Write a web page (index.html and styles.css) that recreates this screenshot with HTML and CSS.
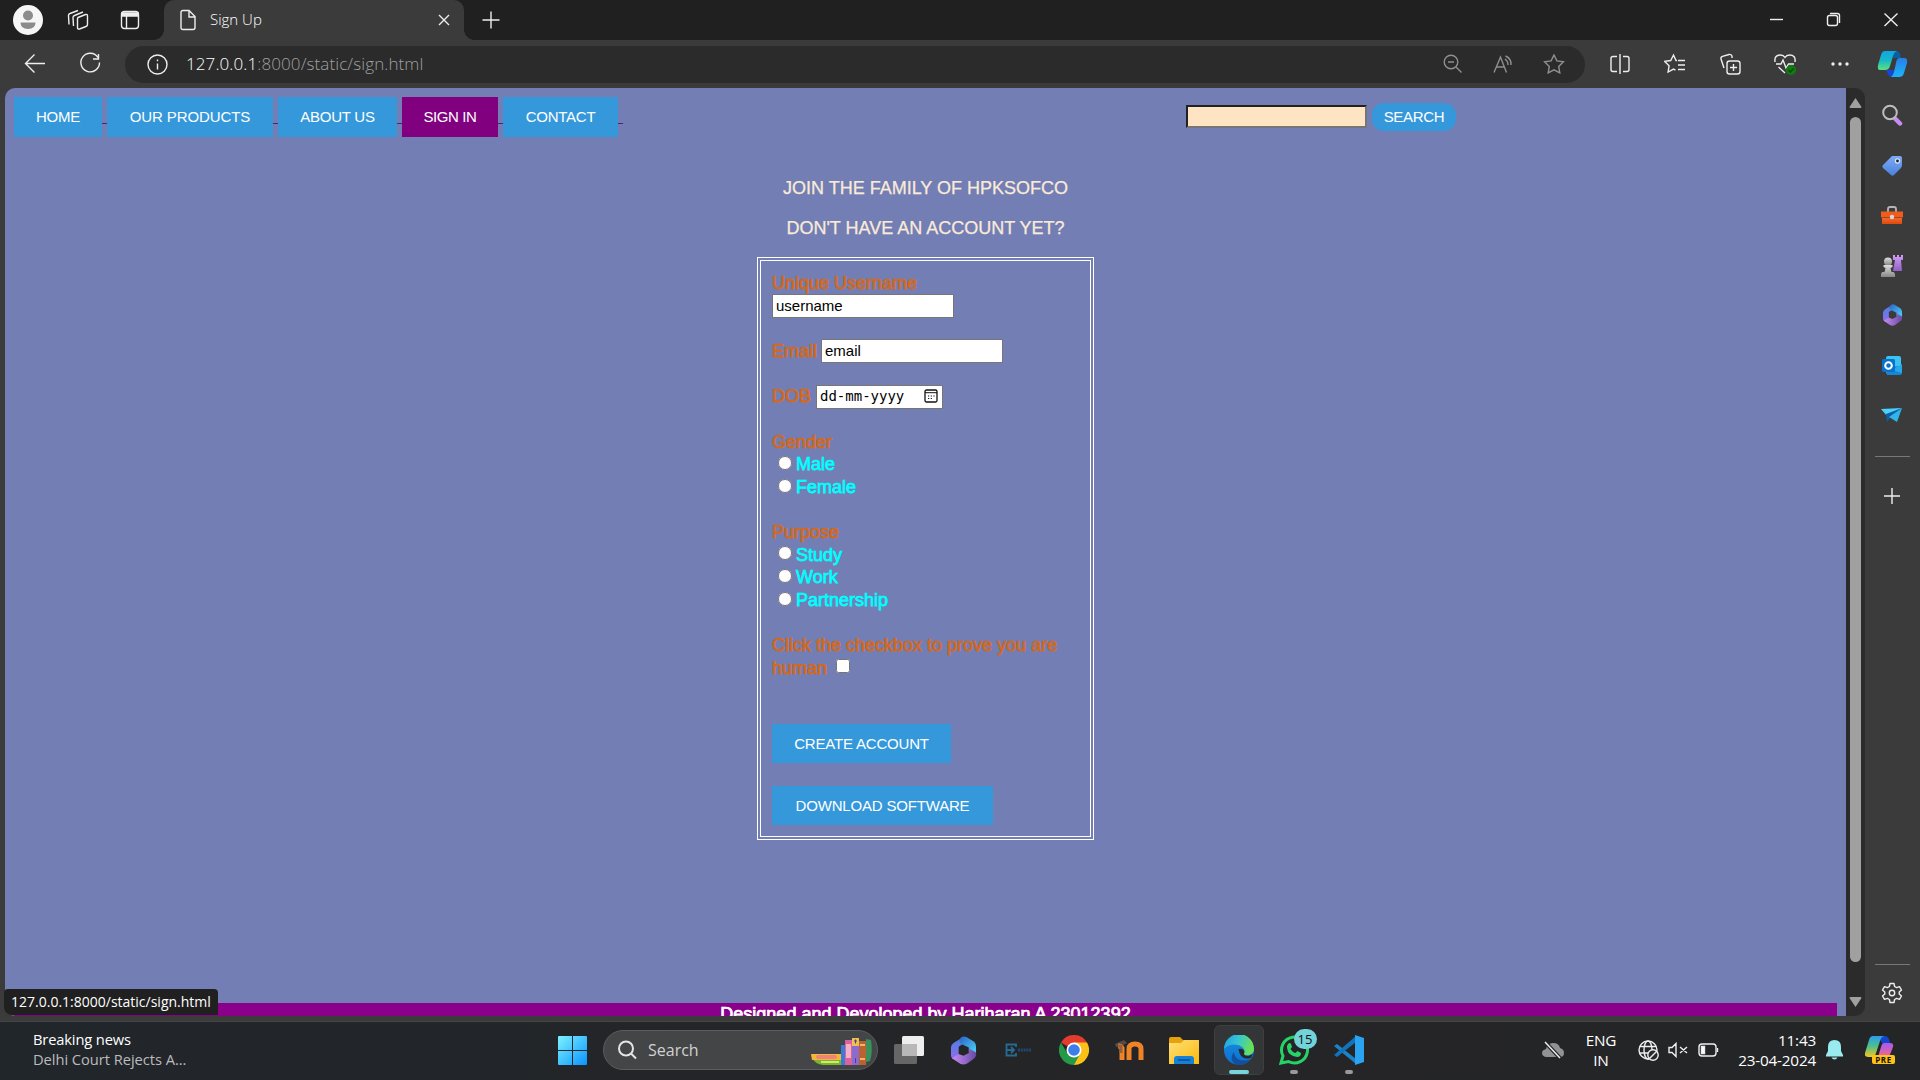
FILE: index.html
```html
<!DOCTYPE html>
<html lang="en">
<head>
<meta charset="utf-8">
<title>Sign Up</title>
<link rel="stylesheet" href="styles.css">
</head>
<body>
<svg class="defs" width="0" height="0">
  <defs>
    <linearGradient id="win" x1="0" y1="0" x2="1" y2="1"><stop offset="0" stop-color="#7cf3ff"/><stop offset="1" stop-color="#0a93ff"/></linearGradient>
    <linearGradient id="teal" x1="0" y1="0" x2="0" y2="1"><stop offset="0" stop-color="#12a5e3"/><stop offset=".5" stop-color="#16b9c9"/><stop offset="1" stop-color="#5fe07b"/></linearGradient>
    <linearGradient id="blue" x1="0" y1="0" x2="0" y2="1"><stop offset="0" stop-color="#2a7de9"/><stop offset="1" stop-color="#19b6f8"/></linearGradient>
    <linearGradient id="tag" x1="0" y1="0" x2="0" y2="1"><stop offset="0" stop-color="#7caaf5"/><stop offset="1" stop-color="#4b80dc"/></linearGradient>
    <linearGradient id="box" x1="0" y1="0" x2="0" y2="1"><stop offset="0" stop-color="#f4682a"/><stop offset="1" stop-color="#dd4a0c"/></linearGradient>
    <linearGradient id="grey" x1="0" y1="0" x2="0" y2="1"><stop offset="0" stop-color="#ddd"/><stop offset="1" stop-color="#888"/></linearGradient>
    <linearGradient id="violet" x1="0" y1="0" x2="0" y2="1"><stop offset="0" stop-color="#d59cf5"/><stop offset="1" stop-color="#9060c8"/></linearGradient>
    <linearGradient id="mleft" x1="0" y1="0" x2="0" y2="1"><stop offset="0" stop-color="#4a7fe8"/><stop offset="1" stop-color="#8c6fe6"/></linearGradient>
    <linearGradient id="mtop" x1="0" y1="0" x2="1" y2="1"><stop offset="0" stop-color="#2a62c8"/><stop offset="1" stop-color="#4fd8f8"/></linearGradient>
    <linearGradient id="mbot" x1="0" y1="0" x2="1" y2="0"><stop offset="0" stop-color="#c78cf4"/><stop offset="1" stop-color="#6a4aa5"/></linearGradient>
    <linearGradient id="edgeTop" x1="0" y1="0" x2="1" y2=".3"><stop offset="0" stop-color="#1f9de0"/><stop offset=".5" stop-color="#35c4d6"/><stop offset="1" stop-color="#68e05a"/></linearGradient>
    <linearGradient id="edgeLow" x1="0" y1="0" x2="0" y2="1"><stop offset="0" stop-color="#1b8fe0"/><stop offset="1" stop-color="#0b6fd0"/></linearGradient>
    <linearGradient id="fold" x1="0" y1="0" x2="1" y2="1"><stop offset="0" stop-color="#ffe07a"/><stop offset="1" stop-color="#fcb90a"/></linearGradient>
    <linearGradient id="rainL" x1="0" y1="0" x2="0" y2="1"><stop offset="0" stop-color="#2a9df0"/><stop offset=".5" stop-color="#4fc08a"/><stop offset="1" stop-color="#f7c51e"/></linearGradient>
    <linearGradient id="rainR" x1="0" y1="0" x2="0" y2="1"><stop offset="0" stop-color="#a45cf0"/><stop offset="1" stop-color="#f5658c"/></linearGradient>
    <symbol id="m365" viewBox="0 0 28 30">
      <path d="M14 1 L4 7 Q1 9 1 12 V20 Q1 23 4 24 L9 21 V11 L18 5 Z" fill="url(#mleft)"/>
      <path d="M12 1 Q14 0 17 1 L25 6 Q27 8 27 11 V19 L19.500 16 V12 L11 8 Q8 5 12 1Z" fill="url(#mtop)"/>
      <path d="M2 23 L9 18.500 L14 20.500 L19.500 17.500 V13 L27 17 V20 Q27 22 24 24 L17 29 Q14 30 11 29 Z" fill="url(#mbot)"/>
    </symbol>
  </defs>
</svg>

<header class="titlebar">
  <div class="title-icons">
    <svg width="46" height="40" viewBox="0 0 46 40"><circle cx="28" cy="20" r="15" fill="#f6f6f6"/><circle cx="28" cy="15.500" r="5" fill="#8b8b8b"/><path d="M20.500 22.500h15q0 6.500-7.500 6.500t-7.500-6.500z" fill="#8b8b8b"/></svg>
    <svg class="line" width="64" height="40" viewBox="0 0 64 40"><path d="M32 17.500l7.500-3q2-.5 2 1.500v8.500q0 1.500-1.500 2l-6.500 2.500q-2 .5-2-1.500v-8.500q0-1 .5-1.500zM27.500 26l-.5-8.500q0-1.500 1.500-2l8.500-3.500M23 24.500l-.5-9q0-1.500 1.500-2l8-3"/></svg>
    <svg class="line" width="40" height="40" viewBox="0 0 40 40"><rect x="11.500" y="11.500" width="17" height="17" rx="3"/><path d="M12 13h16v3H12zM16.500 16v12" fill="#eee"/></svg>
  </div>
  <div class="tab">
    <svg class="line" width="18" height="22" viewBox="0 0 18 22"><path d="M4 1.500h6l6 6V18.500q0 2-2 2H4q-2 0-2-2v-15q0-2 2-2zM10 2v6h6"/></svg>
    <span class="tab-title">Sign Up</span>
    <svg class="line" width="12" height="12" viewBox="0 0 12 12"><path d="M1 1l10 10M11 1L1 11"/></svg>
  </div>
  <svg class="line new-tab" width="18" height="18" viewBox="0 0 18 18"><path d="M9 .5v17M.5 9h17"/></svg>
  <div class="window-buttons">
    <svg class="line" width="57" height="40" viewBox="0 0 57 40"><path d="M22 19.500h13"/></svg>
    <svg class="line" width="57" height="40" viewBox="0 0 57 40"><rect x="22.500" y="15.500" width="10" height="10" rx="2"/><path d="M25 13.500h7.500q2 0 2 2V23"/></svg>
    <svg class="line" width="58" height="40" viewBox="0 0 58 40"><path d="M22.500 13.500l13 12.500M35.500 13.500l-13 12.500"/></svg>
  </div>
</header>

<div class="toolbar">
  <svg class="line nav-icon" width="125" height="48" viewBox="0 0 125 48"><path d="M45 23.500H25.500M34.500 14.500l-9 9 9 9"/><path d="M98 17.500a9.300 9.300 0 1 0 1.500 5M98.500 14v5h-5.500"/></svg>
  <div class="address">
    <svg class="line" width="21" height="21" viewBox="0 0 21 21"><circle cx="10.500" cy="10.500" r="9.500"/><path d="M10.500 9.500v6M10.500 5.500v1.800"/></svg>
    <span class="url">127.0.0.1<span class="url-path">:8000/static/sign.html</span></span>
    <div class="address-icons">
      <svg class="line" width="20" height="20" viewBox="0 0 20 20"><circle cx="8" cy="8" r="6.800"/><path d="M5 8h6M13 13l5.500 5.500"/></svg>
      <svg class="line" width="22" height="20" viewBox="0 0 22 20"><path d="M2 18.500L8.500 3l6 15.500M4.500 13h8M13 5q3 2 3 6M13.500 2q6 2.500 5.500 9"/></svg>
      <svg class="line" width="22" height="20" viewBox="0 0 22 20"><path d="M11 1l2.900 5.900 6.500.9-4.700 4.600 1.100 6.500L11 15.800 5.200 18.900l1.100-6.500L1.600 7.800l6.500-.9z"/></svg>
    </div>
  </div>
  <div class="tool-icons">
    <svg class="line" width="22" height="22" viewBox="0 0 22 22"><path d="M8 3.500H4q-2 0-2 2v11q0 2 2 2h4M14 3.500h4q2 0 2 2v11q0 2-2 2h-4M11 1v20"/></svg>
    <svg class="line" width="22" height="22" viewBox="0 0 22 22"><path d="M13 7.500h-1l-2.500-5.500-2.800 5.500-6 .9 4.400 4.300-1 6.300 5.400-2.900 2 1M14 7.500h7M14 12h7M14 16.500h7"/></svg>
    <svg class="line" width="22" height="22" viewBox="0 0 22 22"><rect x="8" y="8" width="13" height="13" rx="2.500"/><path d="M14.500 11v7M11 14.500h7M5 15L2 6q-.5-2 1.500-2.700L10 1.500q2-.5 3 1.500v2"/></svg>
    <svg class="line" width="22" height="22" viewBox="0 0 22 22"><path d="M1 9q-1-7 5.500-7Q9.500 2 11 4.500 12.500 2 15.500 2 22 2 21 9M2 11h5l2-4 3 8 2.500-4H20M4.500 14l6.500 6"/><circle cx="17" cy="17" r="5" fill="#107c10" stroke="none"/><path d="M14.500 17l2 2 3-3.500" stroke="#064606"/></svg>
    <svg width="22" height="22" viewBox="0 0 22 22" fill="#eee"><circle cx="4" cy="11" r="1.700"/><circle cx="11" cy="11" r="1.700"/><circle cx="18" cy="11" r="1.700"/></svg>
  </div>
  <svg width="32" height="28" viewBox="0 0 32 28"><path d="M16 1h4q3 0 4 7h-8z" fill="#0a5f9e"/><path d="M9 20h9l-3 7q-3 0-4-3z" fill="#1747d8"/><path d="M8 1h12q-3 1-4 5l-3 10q-1 4-5 4H3q-3 0-2-5L4 5q1-4 4-4z" fill="url(#teal)"/><path d="M20 8h7q4 0 3 5l-3 10q-1 4-5 4h-8q2-1 3-5l2-9q.5-5 4-5z" fill="url(#blue)"/></svg>
</div>

<main class="browser">
  <section class="page">
    <nav class="site-nav">
      <a class="site-link">HOME</a><i></i><a class="site-link products">OUR PRODUCTS</a><i></i><a class="site-link about">ABOUT US</a><i></i><a class="site-link current">SIGN IN</a><i></i><a class="site-link contact">CONTACT</a><i></i>
      <form class="site-search"><input class="search-field" type="text"><button class="search-button" type="button">SEARCH</button></form>
    </nav>
    <p class="headline join">JOIN THE FAMILY OF HPKSOFCO</p>
    <p class="headline ask">DON'T HAVE AN ACCOUNT YET?</p>
    <form class="signup">
      <label class="row">Unique Username</label>
      <div class="row"><input class="field" type="text" value="username"></div>
      <div class="row gap wide"><label>Email</label><input class="field" type="text" value="email"></div>
      <div class="row gap wide"><label>DOB</label><span class="field date">dd-mm-yyyy<svg width="14" height="14" viewBox="0 0 14 14"><rect x="1" y="1" width="12" height="12" rx="1.500" fill="none" stroke="#111" stroke-width="1.300"/><path d="M1 3.700h12" stroke="#111"/><path d="M4 7h1.200M6.700 7h1.200M9.400 7h1.200M4 9.500h1.200M6.700 9.500h1.200" stroke="#111" stroke-width="1.200"/></svg></span></div>
      <label class="row gap wide">Gender</label>
      <div class="row option"><input class="radio" type="radio" name="g"><span>Male</span></div>
      <div class="row option"><input class="radio" type="radio" name="g"><span>Female</span></div>
      <label class="row gap">Purpose</label>
      <div class="row option"><input class="radio" type="radio" name="p"><span>Study</span></div>
      <div class="row option"><input class="radio" type="radio" name="p"><span>Work</span></div>
      <div class="row option"><input class="radio" type="radio" name="p"><span>Partnership</span></div>
      <label class="row gap">Click the checkbox to prove you are</label>
      <div class="row"><label>human</label><input class="box" type="checkbox"></div>
      <button class="action create" type="button">CREATE ACCOUNT</button>
      <button class="action download" type="button">DOWNLOAD SOFTWARE</button>
    </form>
    <footer class="site-footer">Designed and Devoloped by Hariharan A 23012392</footer>
  </section>
  <div class="scrollbar">
    <svg width="13" height="10" viewBox="0 0 13 10"><path d="M6.500 0L12.500 9q0 1-1 1h-10q-1 0-1-1z" fill="#a0a0a0"/></svg>
    <div class="thumb"></div>
    <svg width="13" height="10" viewBox="0 0 13 10"><path d="M6.500 10L12.500 1q0-1-1-1h-10q-1 0-1 1z" fill="#a0a0a0"/></svg>
  </div>
  <aside class="sidebar">
    <svg width="22" height="50" viewBox="0 0 22 50"><path d="M14.500 29l4.500 4.500" stroke="#c78cf0" stroke-width="4.500" stroke-linecap="round"/><circle cx="9" cy="22.500" r="6.800" fill="none" stroke="#bdbdbd" stroke-width="2"/></svg>
    <svg width="22" height="50" viewBox="0 0 22 50"><path d="M11 16h8q2 0 2 2v7q0 2-1.300 3.300L13 35q-1.500 1.500-3 0L2 28q-1.500-1.500 0-3z" fill="url(#tag)"/><circle cx="16.500" cy="21" r="2.700" fill="#d8e4f8"/><circle cx="16.500" cy="21" r="1.400" fill="#222"/></svg>
    <svg width="22" height="50" viewBox="0 0 22 50"><path d="M7 22v-3q0-2 2-2h4q2 0 2 2v3" fill="none" stroke="#b5b5b5" stroke-width="1.800"/><path d="M1 28h20v6H1z" fill="url(#box)"/><path d="M0 21.500h22v6H0z" fill="#f05c1c"/><circle cx="11" cy="27" r="2.200" fill="#d8d8d8"/></svg>
    <svg width="22" height="50" viewBox="0 0 22 50"><path d="M12 15h2v2h2v-2h2v2h2v-2h2v5h-2l1 11h-9l2-11h-2z" fill="url(#violet)"/><circle cx="7" cy="21.500" r="4" fill="url(#grey)"/><path d="M2.500 25h9v2l-2 1 1 4h2q2 1 1.500 5H0q-.5-4 1.500-5h2l1-4-2-1z" fill="url(#grey)"/></svg>
    <svg width="21" height="50" viewBox="0 0 21 50"><use href="#m365" x="0" y="14" width="21" height="22"/></svg>
    <svg width="22" height="50" viewBox="0 0 22 50"><rect x="5" y="16" width="15" height="18" rx="2" fill="#39c2f3"/><path d="M5 27l16-1v7q0 2-2 2H6z" fill="#1787d4"/><path d="M11 30l10-6v9z" fill="#26a9ea"/><rect x="1" y="19" width="13" height="13" rx="1.500" fill="#0871cc"/><circle cx="7.500" cy="25.500" r="3.300" fill="none" stroke="#fff" stroke-width="2"/></svg>
    <svg width="22" height="50" viewBox="0 0 22 50"><path d="M0 19l21-1-15 8z" fill="#4bd1fa"/><path d="M5 24l16-6-12 10-3 4z" fill="#0d5da8"/><path d="M21 18l-5 14-8-5z" fill="#30b4ea"/></svg>
    <hr class="side-rule">
    <svg class="line plus" width="16" height="16" viewBox="0 0 16 16"><path d="M8 0v16M0 8h16"/></svg>
    <div class="side-bottom">
      <hr class="side-rule">
      <svg class="line gear" width="22" height="22" viewBox="0 0 22 22"><path d="M9 1.500h4l.6 3 2 1.100 2.900-1 2 3.400-2.300 2v2l2.300 2-2 3.400-2.900-1-2 1.100-.6 3H9l-.6-3-2-1.100-2.900 1-2-3.400 2.300-2v-2l-2.300-2 2-3.400 2.900 1 2-1.100z" stroke-linejoin="round"/><circle cx="11" cy="11" r="2.700"/></svg>
    </div>
  </aside>
  <div class="status">127.0.0.1:8000/static/sign.html</div>
</main>

<footer class="taskbar">
  <div class="news"><span>Breaking news</span><span class="news-text">Delhi Court Rejects A...</span></div>
  <svg class="start" width="29" height="29" viewBox="0 0 29 29"><path d="M1 0h13v14H0V1q0-1 1-1zM15 0h13q1 0 1 1v13H15zM0 15h14v14H1q-1 0-1-1zM15 15h14v13q0 1-1 1H15z" fill="url(#win)"/></svg>
  <div class="task-search">
    <svg width="20" height="20" viewBox="0 0 20 20" fill="none" stroke="#e4e4e4" stroke-width="2"><circle cx="9" cy="8.500" r="7"/><path d="M14 13.500l5 5"/></svg>
    <span class="task-search-text">Search</span>
    <svg class="books" width="62" height="30" viewBox="0 0 62 30"><path d="M2 22h28v6H12Q4 27 2 22z" fill="#79b52d"/><path d="M10 25h18" stroke="#d4e86c" stroke-width="2"/><path d="M0 17h30v6H1z" fill="#f4b73a"/><rect x="5" y="18" width="21" height="4" rx="2" fill="#ed837a"/><path d="M30 8h4v20h-4z" fill="#357dd8"/><path d="M34 3h7v25h-7z" fill="#dc629c"/><path d="M35 7h5v14h-5z" fill="#f3b0c7"/><path d="M41 1h7v27h-7z" fill="#8b6ccc"/><path d="M41 1h7v8h-7z" fill="#eec14d"/><path d="M43 4h3M44.500 2.500v4M44.500 21v5" stroke="#4f3b9a"/><path d="M48 4h7v24h-7z" fill="#bb6330"/><path d="M49 8h5M49 22h5" stroke="#f1b66a" stroke-width="2"/><path d="M55 2l5 1q2 12-1 21l-4 1z" fill="#39915b"/></svg>
  </div>
  <div class="apps">
    <span class="app"><svg width="30" height="28" viewBox="0 0 30 28"><rect x="0" y="8" width="23" height="20" rx="1.500" fill="#666"/><rect x="8" y="0" width="22" height="20" rx="1.500" fill="#eee"/><path d="M8 8h15v12H9q-1 0-1-1z" fill="#b8b8b8"/></svg></span>
    <span class="app"><svg width="27" height="29"><use href="#m365" width="27" height="29"/></svg></span>
    <span class="app"><svg width="27" height="14" viewBox="0 0 27 14"><path d="M11 4V1.500H1.500v11H11V10M1 7h8M6 4l3 3-3 3" fill="none" stroke="#276b92" stroke-width="1.800"/><path d="M13 7h13" stroke="#204870" stroke-width="3" stroke-dasharray="2 .8"/></svg></span>
    <span class="app"><svg width="30" height="30" viewBox="0 0 30 30"><path d="M15 15L2 7.500A15 15 0 0 1 28 7.500z" fill="#e33b2e"/><path d="M15 15V7.500h13A15 15 0 0 1 15 30z" fill="#fbc116"/><path d="M2 7.500A15 15 0 0 0 15 30l6-11-12.500-.5z" fill="#26984a"/><circle cx="15" cy="15" r="7.500" fill="#fff"/><circle cx="15" cy="15" r="5.800" fill="#3b7ded"/></svg></span>
    <span class="app"><svg width="30" height="20" viewBox="0 0 30 20"><path d="M1 4l9-4 3 3-7 4H2z" fill="#554a45"/><path d="M8 20V8q-1-2-4-2M15 20V9q0-5 6-5t6 5v11" fill="none" stroke="#ee8426" stroke-width="5"/><path d="M4 6h3v7" fill="none" stroke="#96603a" stroke-width="3"/></svg></span>
    <span class="app"><svg width="30" height="27" viewBox="0 0 30 27"><path d="M0 2q0-2 2-2h9l3 3h14q2 0 2 2v5H0z" fill="#e7a20b"/><path d="M0 6h12l3-3h15v24H0z" fill="url(#fold)"/><path d="M5 27v-5q0-3 3-3h14q3 0 3 3v5z" fill="#1680d8"/><path d="M9 23h12" stroke="#0a4f91" stroke-width="1.500"/></svg></span>
    <span class="app active"><svg width="30" height="30" viewBox="0 0 30 30"><circle cx="15" cy="15" r="15" fill="url(#edgeLow)"/><path d="M0 14A15 15 0 0 1 30 14c0 5-5 7-9 6-2-.5-1-2-.5-4C20 10 7 6 0 14z" fill="url(#edgeTop)"/><path d="M10 17c0 7 8 11 17 7q-5 7-14 6Q4 25 10 17z" fill="#124f9c"/><path d="M14.500 14q5-1 6 3-2 4 4 4l4.500-2-2 4q-11 3-12.500-9z" fill="#29292a"/></svg></span>
    <span class="app dot"><svg width="30" height="30" viewBox="0 0 30 30"><path d="M2 28l2-7A13 13 0 1 1 9.500 26.500z" fill="none" stroke="#25d366" stroke-width="3"/><path d="M9 9q2-2 3 0l1 3-1.500 2q1.500 3 5 4l2-2 3.500 2q0 4-4 4Q9 21 8 13q-.5-2 1-4z" fill="#25d366"/></svg><b class="badge">15</b></span>
    <span class="app dot"><svg width="30" height="30" viewBox="0 0 30 30"><path d="M0 11l3-2 19 15v5z" fill="#1b83cc"/><path d="M0 20l3 2L22 7V1z" fill="#1173bd"/><path d="M21 0l9 3v24l-9 3z" fill="#2aa3f2"/></svg></span>
  </div>
  <div class="tray">
    <svg class="cloud" width="22" height="18" viewBox="0 0 22 18"><path d="M4 16q-4-1-4-4t4-4q1-6 7-6t7 5q4 1 4 5t-4 4z" fill="#929292"/><path d="M3 1l15 16" stroke="#26282a" stroke-width="4"/><path d="M3 1l15 16" stroke="#eee" stroke-width="1.400"/></svg>
    <div class="lang">ENG<br>IN</div>
    <svg class="line globe" width="21" height="21" viewBox="0 0 21 21"><circle cx="10" cy="10" r="9"/><ellipse cx="10" cy="10" rx="4" ry="9"/><path d="M2 6.500h16M1 13h9"/><circle cx="15" cy="15" r="5.200" fill="#27292b"/><path d="M11.500 18.500l7-7"/></svg>
    <svg class="line volume" width="20" height="16" viewBox="0 0 20 16"><path d="M1 5.500h3l4-4v13l-4-4H1zM12 5l7 6M19 5l-7 6"/></svg>
    <svg class="line battery" width="21" height="14" viewBox="0 0 21 14"><rect x="1" y="1" width="17" height="12" rx="3"/><path d="M3.500 3.500h3v7h-3z" fill="#fff"/><path d="M19.500 5v4"/></svg>
    <div class="clock">11:43<br>23-04-2024</div>
    <svg class="bell" width="17" height="20" viewBox="0 0 17 20" fill="#99ebf0"><path d="M8.500 0Q15 0 15 7v4l2 4v1.500H0V15l2-4V7Q2 0 8.500 0zM5.500 17.500h6q-1 2-3 2t-3-2z"/></svg>
    <div class="copilot"><svg width="29" height="24" viewBox="0 0 29 24"><path d="M13 0h7q4 0 5 7h-8z" fill="#1744cf"/><path d="M8 0h11q-3 1-4 5l-4 12q-1 4-4 4H3q-4 0-3-4L4 4q1-4 4-4z" fill="url(#rainL)"/><path d="M19 7h6q4 0 3 4l-4 10H13l3-10q1-4 3-4z" fill="url(#rainR)"/></svg><b class="pre">PRE</b></div>
  </div>
</footer>
</body>
</html>
```
FILE: styles.css
```css
* { box-sizing: border-box; }
body { margin: 0; width: 1920px; height: 1080px; overflow: hidden; display: flex; flex-direction: column; background: #3b3b3b; color: #fff; font-family: "Open Sans", "Noto Sans", sans-serif; }
svg { display: block; flex: none; }
.defs { position: absolute; }
.line { fill: none; stroke: #eee; stroke-width: 1.400; }

.titlebar { height: 40px; flex: none; display: flex; align-items: center; background: #202020; }
.title-icons { width: 164px; display: flex; }
.tab { position: relative; width: 300px; height: 40px; padding: 0 14px 0 15px; display: flex; align-items: center; background: #3b3b3b; border-radius: 10px 10px 0 0; }
.tab::before, .tab::after { content: ""; position: absolute; bottom: 0; width: 10px; height: 10px; }
.tab::before { left: -10px; background: radial-gradient(circle at 0 0, transparent 9.500px, #3b3b3b 10px); }
.tab::after { right: -10px; background: radial-gradient(circle at 100% 0, transparent 9.500px, #3b3b3b 10px); }
.tab-title { flex: 1; margin-left: 13px; padding-bottom: 2px; font-size: 15px; font-weight: 300; }
.new-tab { margin-left: 18px; }
.window-buttons { margin-left: auto; display: flex; }

.toolbar { height: 48px; flex: none; display: flex; align-items: center; }
.nav-icon { flex: none; }
.address { width: 1460px; height: 37px; padding: 0 6px 0 22px; display: flex; align-items: center; border-radius: 19px; background: #2b2b2b; }
.url { margin-left: 18px; padding-bottom: 2px; flex: 1; font-size: 17px; font-weight: 300; letter-spacing: .1px; }
.url-path { color: #a0a0a0; }
.address-icons { display: grid; grid-template-columns: repeat(3, 50.500px); justify-items: center; }
.address-icons .line { stroke: #8f8f8f; }
.tool-icons { margin-left: 7px; display: grid; grid-template-columns: repeat(5, 55px); justify-items: center; }
.tool-icons + svg { margin-left: 10px; }

.browser { position: relative; height: 933px; flex: none; padding: 0 0 5px 5px; display: flex; }
.page { width: 1841px; height: 928px; overflow: hidden; display: flex; flex-direction: column; padding: 9px 9px 0; background: #737eb5; border-radius: 10px 0 0 10px; font-family: "Liberation Sans", Arial, sans-serif; }
.site-nav { height: 40px; flex: none; display: flex; align-items: center; }
.site-nav i { width: 5px; height: 1px; margin-top: 13px; background: #551a8b; }
.site-link { width: 88px; height: 40px; line-height: 40px; background: #3498db; font-size: 15px; text-align: center; letter-spacing: -.25px; }
.site-link.products { width: 166px; letter-spacing: -.1px; }
.site-link.about { width: 119px; }
.site-link.current { width: 96px; background: #800080; letter-spacing: -.4px; }
.site-link.contact { width: 115px; }
.site-search { margin: 0 0 1px 563px; display: flex; align-items: center; gap: 5px; }
.search-field { width: 181px; height: 23px; background: #ffe4c4; border: 2px inset #767676; padding: 0; }
.search-button { width: 84px; height: 28px; margin-top: 1px; padding: 0 0 2px; border: 0; border-radius: 12px; background: #3498db; color: #fff; font: 15px "Liberation Sans", Arial, sans-serif; letter-spacing: -.3px; }

.headline { margin: 0; height: 40px; line-height: 40px; text-align: center; font-size: 18px; color: #faebd7; -webkit-text-stroke: .25px; }
.join { margin-top: 31px; }
.signup { width: 337px; height: 583px; flex: none; margin: 9px 0 0 743px; padding: 11px; display: flex; flex-direction: column; border: 4px double #fff; color: #d2691e; font-size: 18px; white-space: nowrap; }
.signup label, .option span, .site-footer { -webkit-text-stroke: .75px; }
.row { height: 22.700px; flex: none; display: flex; align-items: center; }
.row.gap { margin-top: 22.300px; }
.row.gap.wide { margin-top: 22.700px; }
.field { width: 182px; height: 24px; padding: 0 3px 1px; border: 1px solid #767676; background: #fff; color: #000; font: 15px "Liberation Sans", Arial, sans-serif; }
.row label + .field { margin-left: 4px; }
.row label + .field.date { width: 127px; margin-left: 5px; display: flex; align-items: center; justify-content: space-between; padding-right: 4px; font: 14px "DejaVu Sans Mono", monospace; }
.option { color: #00ffff; }
.radio { width: 14px; height: 14px; margin: -4px 4px 0 6px; }
.box { width: 14px; height: 14px; margin: -4px 0 0 9px; }
.action { height: 39px; flex: none; border: 0; padding: 0; background: #3498db; color: #fff; font: 15px "Liberation Sans", Arial, sans-serif; letter-spacing: -.18px; }
.create { width: 179px; margin-top: 44.800px; }
.download { width: 221px; margin-top: 23px; }
.site-footer { height: 22px; flex: none; margin-top: 163px; line-height: 22px; background: #8b008b; text-align: center; font-size: 18px; }

.scrollbar { width: 19px; height: 928px; display: flex; flex-direction: column; align-items: center; padding: 10px 0 9px; background: #2b2b2b; border-radius: 0 10px 10px 0; }
.thumb { width: 11px; height: 845px; margin: 9px 0 auto; border-radius: 6px; background: #a0a0a0; }
.sidebar { flex: 1; height: 933px; padding: 2px 1px 0 0; display: flex; flex-direction: column; align-items: center; }
.side-rule { width: 35px; height: 1px; margin: 16px 0 0; border: 0; background: #777; }
.plus { margin-top: 31px; }
.side-bottom { margin-top: auto; margin-bottom: 17px; display: flex; flex-direction: column; align-items: center; gap: 17px; }
.status { position: absolute; left: 4px; top: 901px; width: 214px; height: 26px; padding-left: 7px; border-radius: 4px 4px 0 8px; background: #202020; font-size: 14px; line-height: 25px; white-space: nowrap; }

.taskbar { height: 59px; flex: none; display: flex; align-items: center; padding-bottom: 1px; box-shadow: inset 0 1px #454545; background: linear-gradient(90deg, #21262b, #252527 60%, #242527); }
.news { width: 524px; padding: 0 0 2px 33px; display: flex; flex-direction: column; font-size: 14.700px; line-height: 20px; letter-spacing: -.15px; }
.news-text { color: #bbb; letter-spacing: -.05px; }
.start { margin-left: 34px; }
.task-search { width: 275px; height: 40px; margin-left: 16px; padding: 0 4px 0 13px; display: flex; align-items: center; border: 1px solid #5b5c5e; border-radius: 20px; background: #434547; }
.task-search-text { flex: 1; margin-left: 11px; font-size: 16px; color: #d2d2d2; }
.books { margin-top: 4px; }
.apps { margin-left: 3px; display: grid; grid-template-columns: repeat(9, 55px); justify-items: center; }
.app { position: relative; width: 50px; height: 50px; display: grid; place-items: center; border-radius: 6px; }
.app.active { background: #343537; border: 1px solid #3e3f40; }
.active::after, .dot::after { content: ""; position: absolute; bottom: 1px; width: 8px; height: 4px; border-radius: 2px; background: #999; }
.active::after { bottom: 0; width: 20px; background: #78d4dc; }
.badge { position: absolute; left: 25px; top: 4px; width: 23px; height: 20px; border-radius: 10px; background: #72d3da; color: #111; font-size: 13px; font-weight: 400; line-height: 20px; text-align: center; }
.tray { flex: 1; display: flex; align-items: center; font-size: 15.300px; line-height: 20px; letter-spacing: -.2px; }
.cloud { margin-left: 166px; }
.lang { width: 40px; margin-left: 17px; text-align: center; }
.lang, .clock { padding-bottom: 1px; }
.globe { margin-left: 17px; }
.volume { margin-left: 9px; }
.battery { margin-left: 10px; }
.clock { width: 96px; margin-left: 1px; text-align: right; }
.bell { margin-left: 10px; }
.copilot { position: relative; margin-left: 22px; padding-bottom: 4px; }
.pre { position: absolute; left: 7px; top: 19px; width: 23px; height: 9px; border-radius: 2px; background: #fdc416; color: #111; font-size: 8px; line-height: 9px; letter-spacing: .5px; text-align: center; }
```
